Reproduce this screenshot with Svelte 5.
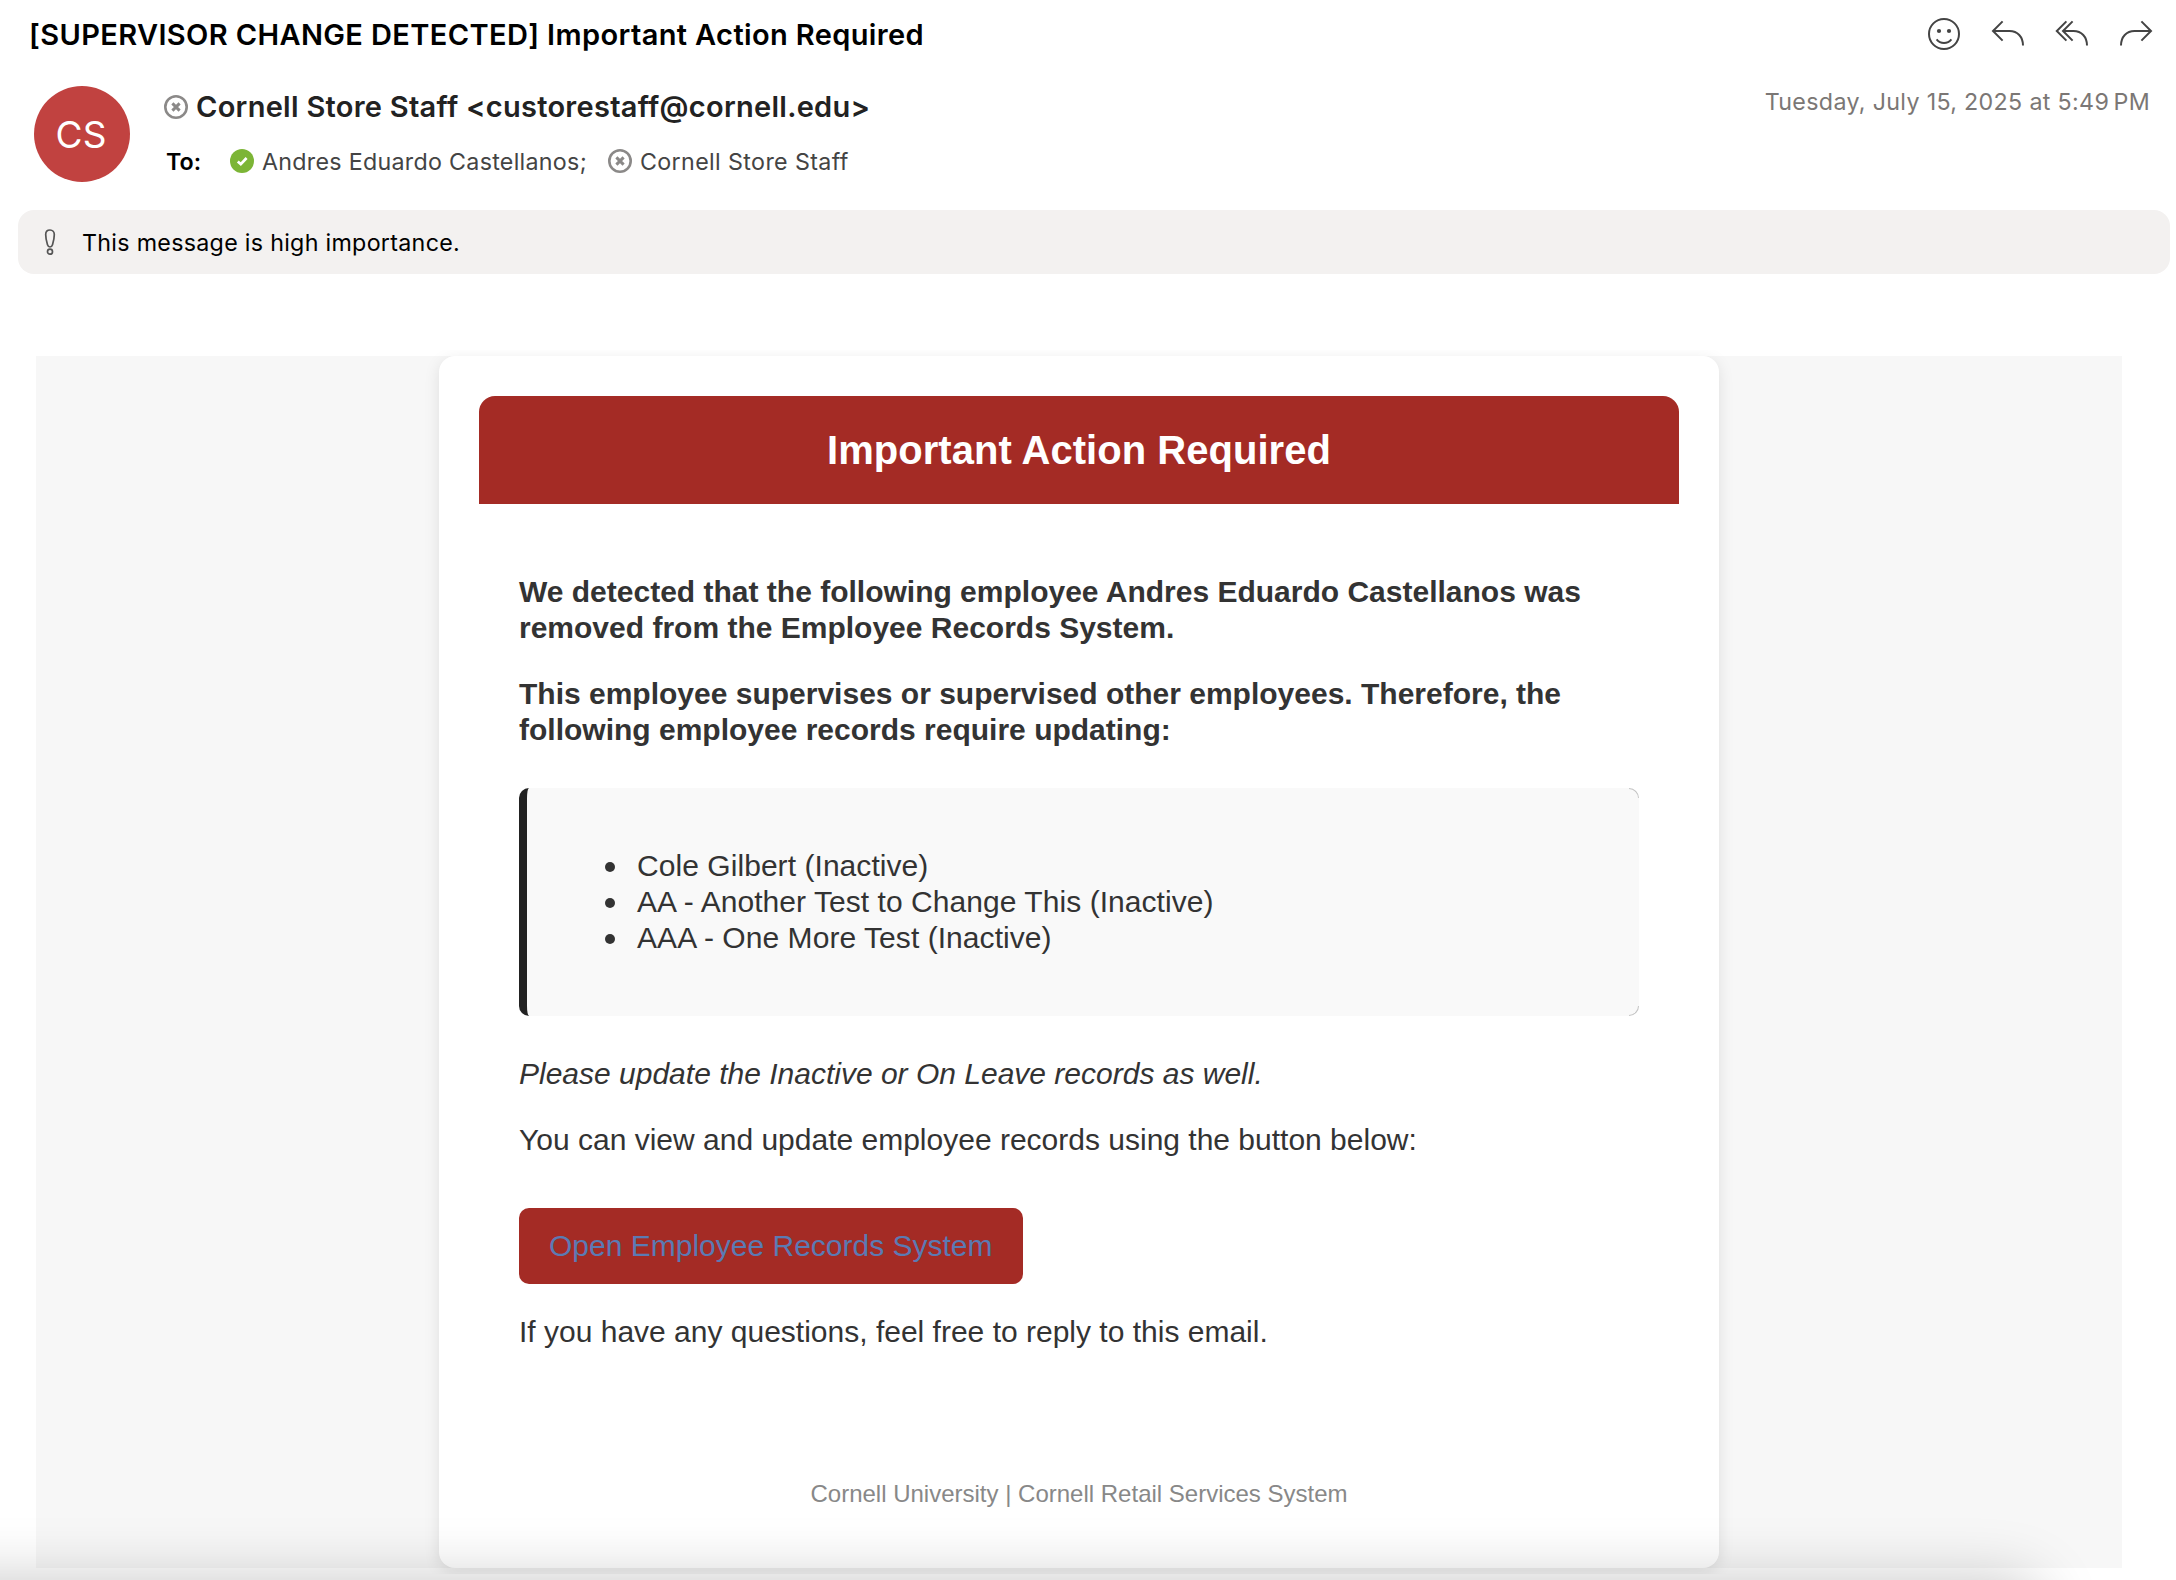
<script>
  const records = [
    'Cole Gilbert (Inactive)',
    'AA - Another Test to Change This (Inactive)',
    'AAA - One More Test (Inactive)'
  ];
</script>

{#snippet unknownPresence()}
  <svg class="presence" viewBox="0 0 24 24" aria-hidden="true">
    <circle cx="12" cy="12" r="10.7" fill="none" stroke="#8b8988" stroke-width="2.6" />
    <path d="M8.4 8.4L15.6 15.6M15.6 8.4L8.4 15.6" stroke="#8b8988" stroke-width="3" />
  </svg>
{/snippet}

<main class="window">
  <header class="topbar">
    <h1 class="subject">[SUPERVISOR CHANGE DETECTED] Important Action Required</h1>
    <nav class="actions">
      <svg class="action" viewBox="0 0 32 32">
        <circle cx="16" cy="16" r="15" />
        <circle class="eye" cx="11" cy="13" r="2.1" />
        <circle class="eye" cx="21" cy="13" r="2.1" />
        <path d="M8.6 21.4C12.4 26.2 19.6 26.2 23.4 21.4" />
      </svg>
      <svg class="action" viewBox="0 0 32 32">
        <path d="M10.6 3.4L1 13L10.6 22.6M1 13H17.5C25.5 13 31 18.8 31 27.6" />
      </svg>
      <svg class="action" viewBox="0 0 32 32">
        <path d="M10.4 3.4L0.8 13L10.4 22.6M16.6 3.4L7 13L16.6 22.6M7 13H17.5C25.5 13 31 18.8 31 27.6" />
      </svg>
      <svg class="action" viewBox="0 0 32 32">
        <path d="M21.4 3.4L31 13L21.4 22.6M31 13H14.5C6.5 13 1 18.8 1 27.6" />
      </svg>
    </nav>
  </header>

  <section class="envelope">
    <div class="avatar">CS</div>
    <div class="people">
      <div class="person sender">
        {@render unknownPresence()}
        <span>Cornell Store Staff &lt;custorestaff@cornell.edu&gt;</span>
      </div>
      <div class="to-line">
        <span class="to-label">To:</span>
        <div class="person first">
          <svg class="presence" viewBox="0 0 24 24" aria-hidden="true">
            <circle cx="12" cy="12" r="12" fill="#7cb536" />
            <path d="M7.8 12.4L10.8 15.2L16.6 9" fill="none" stroke="#fff" stroke-width="2.7" />
          </svg>
          <span class="name">Andres Eduardo Castellanos;</span>
        </div>
        <div class="person second">
          {@render unknownPresence()}
          <span class="name">Cornell Store Staff</span>
        </div>
      </div>
    </div>
    <time class="date">Tuesday, July 15, 2025 at 5:49<span class="meridiem">&nbsp;PM</span></time>
  </section>

  <aside class="notice">
    <svg class="bang" viewBox="0 0 12 28" aria-hidden="true">
      <path d="M6 2C3.4 2 1.7 3.9 1.7 6.6C1.7 10.4 2.6 14 3.5 16.8C4 18.4 4.8 19 6 19C7.2 19 8 18.4 8.5 16.8C9.4 14 10.3 10.4 10.3 6.6C10.3 3.9 8.6 2 6 2Z" />
      <circle cx="6" cy="23.7" r="2.5" />
    </svg>
    <span>This message is high importance.</span>
  </aside>

  <div class="viewport">
    <div class="canvas">
      <article class="card">
        <h2 class="banner">Important Action Required</h2>
        <div class="content">
          <p class="strong">
            We detected that the following employee Andres Eduardo Castellanos was removed from the Employee Records System.
          </p>
          <p class="strong">
            This employee supervises or supervised other employees. Therefore, the following employee records require updating:
          </p>
          <div class="records">
            <ul>
              {#each records as record}
                <li>{record}</li>
              {/each}
            </ul>
          </div>
          <p class="note">Please update the Inactive or On Leave records as well.</p>
          <p>You can view and update employee records using the button below:</p>
          <a class="button" href="#records">Open Employee Records System</a>
          <p>If you have any questions, feel free to reply to this email.</p>
        </div>
        <footer>Cornell University | Cornell Retail Services System</footer>
      </article>
    </div>
  </div>

  <div class="fade"><div class="fade-source"></div></div>
</main>

<style>
  :global(body) {
    margin: 0;
    background: #fff;
  }

  .window {
    position: relative;
    width: 2176px;
    height: 1580px;
    overflow: hidden;
    background: #fff;
    font-family: Inter, 'Liberation Sans', sans-serif;
  }

  .topbar {
    display: flex;
    align-items: center;
    justify-content: space-between;
    height: 68px;
    padding: 0 24px 0 29px;
  }

  .subject {
    margin: 0;
    color: #000;
    font-size: 29px;
    font-weight: 600;
    letter-spacing: 0.375px;
    white-space: nowrap;
  }

  .actions {
    display: flex;
    gap: 32px;
  }

  .action {
    width: 32px;
    height: 32px;
    overflow: visible;
    fill: none;
    stroke: #444;
    stroke-width: 2;
  }

  .eye {
    fill: #444;
    stroke: none;
  }

  .envelope {
    display: flex;
    align-items: flex-start;
    height: 142px;
    padding: 0 24px 0 34px;
    box-sizing: border-box;
    color: #444;
    font-size: 23.25px;
    line-height: 32px;
    white-space: nowrap;
  }

  .avatar {
    width: 96px;
    height: 96px;
    margin-top: 18px;
    border-radius: 50%;
    box-sizing: border-box;
    padding: 1px 2px 0 0;
    background: #c14240;
    color: #fff;
    font-size: 37px;
    line-height: 96px;
    text-align: center;
  }

  .people {
    display: flex;
    flex-direction: column;
    gap: 22px;
    margin: 23px 0 0 34px;
  }

  .person {
    display: flex;
    align-items: center;
    gap: 8px;
    height: 32px;
  }

  .presence {
    flex: none;
    width: 24px;
    height: 24px;
  }

  .sender {
    color: #222;
    font-size: 29px;
    font-weight: 600;
    letter-spacing: 0.273px;
  }

  .to-line {
    display: flex;
    height: 32px;
  }

  .to-label {
    width: 64px;
    padding: 1px 0 0 2px;
    color: #000;
    font-weight: 600;
  }

  .name {
    padding-top: 2px;
  }

  .first {
    margin-right: 21px;
    letter-spacing: 0.28px;
  }

  .second {
    letter-spacing: 0.37px;
  }

  .date {
    margin: 18px 0 0 auto;
    padding-right: 2px;
    color: #7b7775;
    letter-spacing: 0.32px;
  }

  .meridiem {
    word-spacing: -2.5px;
  }

  .notice {
    display: flex;
    align-items: center;
    gap: 26px;
    height: 64px;
    margin: 0 6px 0 18px;
    padding-left: 26px;
    border-radius: 16px;
    background: #f3f1f0;
    color: #000;
    font-size: 23.25px;
    letter-spacing: 0.29px;
  }

  .bang {
    width: 12px;
    height: 28px;
    fill: none;
    stroke: #555;
    stroke-width: 1.7;
  }

  .viewport {
    margin-top: 76px;
    padding: 6px 54px 6px 36px;
    overflow: hidden;
    font-family: 'Liberation Sans', Arial, sans-serif;
  }

  .canvas {
    background: #f7f7f7;
  }

  .card {
    width: 1280px;
    height: 1212px;
    margin: 0 auto;
    padding: 40px;
    box-sizing: border-box;
    border-radius: 16px;
    background: #fff;
    box-shadow: 0 4px 16px rgba(0, 0, 0, 0.1);
    color: #333;
    font-size: 30px;
    line-height: 36px;
  }

  .banner {
    margin: 0;
    padding: 30px;
    border-radius: 16px 16px 0 0;
    background: #a42b25;
    color: #fff;
    font-size: 40px;
    font-weight: 700;
    line-height: 48px;
    letter-spacing: 0.04px;
    text-align: center;
  }

  .content {
    display: flow-root;
    padding: 40px;
  }

  p {
    margin: 30px 0;
  }

  .strong {
    font-weight: 700;
  }

  .note {
    font-style: italic;
  }

  .records {
    position: relative;
    margin: 40px 0;
    padding: 30px;
    border-left: 8px solid #222;
    border-radius: 10px;
    background: #f9f9f9;
  }

  /* Hairline where the rounded corners meet the page */
  .records::before,
  .records::after {
    content: '';
    position: absolute;
    right: 0;
    width: 9px;
    height: 9px;
    border-right: 1px solid #c4c4c4;
  }

  .records::before {
    top: 0;
    border-top: 1px solid #c4c4c4;
    border-top-right-radius: 10px;
  }

  .records::after {
    bottom: 0;
    border-bottom: 1px solid #c4c4c4;
    border-bottom-right-radius: 10px;
  }

  ul {
    margin: 30px 0;
    padding-left: 80px;
    list-style: none;
  }

  li {
    letter-spacing: 0.055px;
  }

  li::before {
    content: '';
    display: inline-block;
    width: 10px;
    height: 10px;
    margin: 0 22px 0 -32px;
    border-radius: 50%;
    background: #333;
    vertical-align: 4px;
  }

  .button {
    display: block;
    width: fit-content;
    margin-top: 50px;
    padding: 20px 30px;
    border-radius: 10px;
    background: #a42b25;
    color: #5b7ab3;
    text-decoration: none;
  }

  footer {
    margin-top: 60px;
    color: #888;
    font-size: 24px;
    line-height: 28px;
    text-align: center;
  }

  /* Soft shadow rising from the bottom edge of the window */
  .fade {
    position: absolute;
    inset: auto 0 0 0;
    height: 120px;
    overflow: hidden;
    pointer-events: none;
  }

  .fade-source {
    position: absolute;
    top: 100%;
    left: -200px;
    width: 2240px;
    height: 300px;
    border-radius: 30px;
    box-shadow: 0 0 62px rgba(0, 0, 0, 0.22);
  }
</style>
